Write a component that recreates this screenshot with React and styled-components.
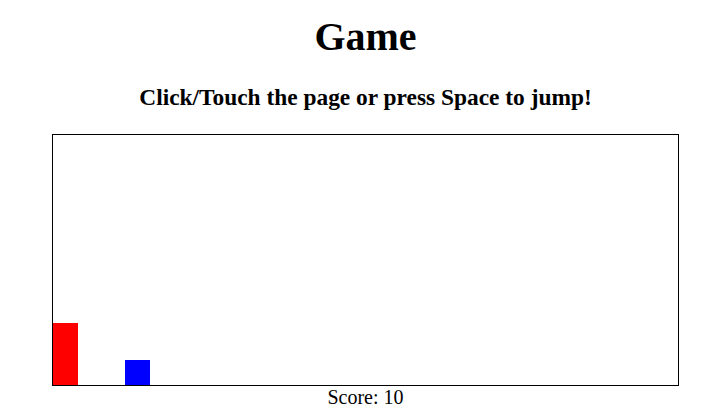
import React from "react";
import styled, { createGlobalStyle } from "styled-components";

const GlobalStyle = createGlobalStyle`
  body {
    margin: 0;
    padding-left: 4px;
    font-family: "Liberation Serif", "Times New Roman", serif;
    font-size: 20px;
    background: #fff;
    color: #000;
  }
`;

const Page = styled.div`
  text-align: center;
  padding-top: 14px;
`;

const Title = styled.h1`
  font-size: 40px;
  line-height: 46px;
  margin: 0 0 24px;
`;

const Hint = styled.h3`
  font-size: 23.4px;
  line-height: 27px;
  margin: 0 0 23px;
`;

const Board = styled.div`
  position: relative;
  width: 625px;
  height: 250px;
  margin: 0 auto;
  border: 1px solid #000;
  background: #fff;
`;

const Block = styled.div`
  position: absolute;
  bottom: 0;
  width: 25px;
  height: ${(p) => p.$h}px;
  left: ${(p) => p.$x}px;
  background: ${(p) => p.$color};
`;

const Score = styled.div`
  font-size: 20px;
  line-height: 23px;
`;

export default function App() {
  return (
    <Page>
      <GlobalStyle />
      <Title>Game</Title>
      <Hint>Click/Touch the page or press Space to jump!</Hint>
      <Board>
        <Block $x={0} $h={62} $color="#ff0000" />
        <Block $x={72} $h={25} $color="#0000ff" />
      </Board>
      <Score>Score: 10</Score>
    </Page>
  );
}
